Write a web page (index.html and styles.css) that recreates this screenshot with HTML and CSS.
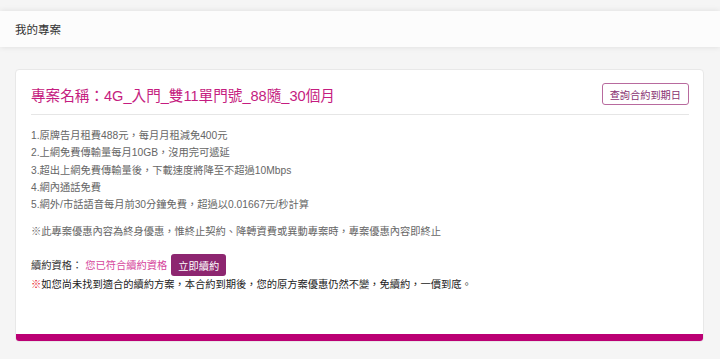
FILE: index.html
```html
<!DOCTYPE html>
<html>
<head>
    <title>我的專案</title>
    <link rel="stylesheet" href="styles.css">
</head>
<body>
    <div class="topbar">我的專案</div>

    <div class="main">
        <div class="card">
            <div class="card-head">
                <h2 class="plan-name">專案名稱：4G_入門_雙11單門號_88隨_30個月</h2>
                <button class="btn-outline">查詢合約到期日</button>
            </div>

            <div class="card-body">
                <ul class="plan-list">
                    <li>1.原牌告月租費488元，每月月租減免400元</li>
                    <li>2.上網免費傳輸量每月10GB，沒用完可遞延</li>
                    <li>3.超出上網免費傳輸量後，下載速度將降至不超過10Mbps</li>
                    <li>4.網內通話免費</li>
                    <li>5.網外/市話語音每月前30分鐘免費，超過以0.01667元/秒計算</li>
                </ul>
                <p class="plan-note">※此專案優惠內容為終身優惠，惟終止契約、降轉資費或異動專案時，專案優惠內容即終止</p>

                <div class="renew-row">
                    <span class="renew-label">續約資格：</span>
                    <span class="renew-status">您已符合續約資格</span>
                    <button class="btn-solid">立即續約</button>
                </div>
                <p class="renew-tip"><span class="mark">※</span>如您尚未找到適合的續約方案，本合約到期後，您的原方案優惠仍然不變，免續約，一價到底。</p>
            </div>
            <div class="card-bar"></div>
        </div>
    </div>
</body>
</html>
```

FILE: styles.css
```css
body {
    font-family: "Liberation Sans", "Noto Sans CJK TC", sans-serif;
    margin: 0;
    padding-top: 11px;
    background-color: #f5f5f5;
    color: #333;
}

.topbar {
    height: 36px;
    display: flex;
    align-items: center;
    padding-left: 15px;
    background-color: #fcfcfc;
    box-shadow: 0 0 6px rgba(0, 0, 0, 0.1);
    font-size: 11.5px;
    color: #333;
}

.main {
    padding: 22px 16px 0 15px;
}

.card {
    background-color: #fff;
    border: 1px solid #e8e8e8;
    border-radius: 4px;
    overflow: hidden;
}

.card-head {
    display: flex;
    justify-content: space-between;
    align-items: center;
    margin: 0 14px 0 15px;
    padding: 13px 0 9px;
    border-bottom: 1px solid #e6e6e6;
}

.plan-name {
    margin: 0;
    font-size: 14.6px;
    font-weight: normal;
    color: #c51c80;
}

.btn-outline {
    height: 22px;
    padding: 0 7px;
    border: 1px solid #b86a9e;
    border-radius: 3px;
    background-color: #fff;
    color: #8a3372;
    font-family: inherit;
    font-size: 10.2px;
    cursor: pointer;
}

.card-body {
    padding: 12px 15px 40px;
    font-size: 10.25px;
    line-height: 17.3px;
}

.plan-list {
    list-style: none;
    margin: 0;
    padding: 0;
    color: #666;
}

.plan-note {
    margin: 9.5px 0 0;
    color: #666;
}

.renew-row {
    display: flex;
    align-items: center;
    margin-top: 14px;
    height: 22px;
}

.renew-label {
    color: #333;
    margin-right: 3px;
}

.renew-status {
    color: #d6469c;
    margin-right: 4px;
}

.btn-solid {
    height: 22px;
    padding: 0 7px;
    border: none;
    border-radius: 3px;
    background-color: #8d2670;
    color: #fff;
    font-family: inherit;
    font-size: 10.25px;
    cursor: pointer;
}

.renew-tip {
    margin: 0;
    color: #222;
}

.mark {
    color: #e8141e;
}

.card-bar {
    height: 7px;
    background-color: #bb0074;
}
```
